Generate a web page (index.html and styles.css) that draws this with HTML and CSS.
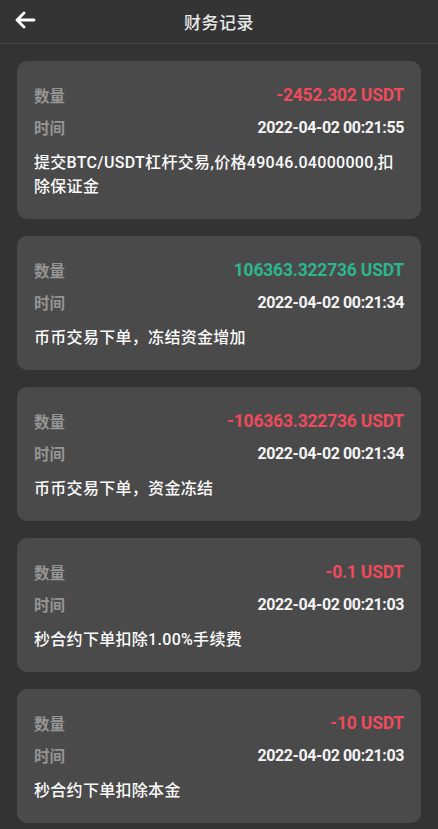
FILE: index.html
```html
<!DOCTYPE html>
<html lang="zh">
<head>
<meta charset="utf-8">
<title>财务记录</title>
<link rel="stylesheet" href="styles.css">
</head>
<body>
<header class="topbar">
  <span class="back">
    <svg width="22" height="18" viewBox="0 0 22 18"><path d="M20 9H3M10 2L3 9l7 7" fill="none" stroke="#fff" stroke-width="2.8" stroke-linecap="round" stroke-linejoin="round"/></svg>
  </span>
  <h1 class="title">财务记录</h1>
</header>
<main class="list">
  <section class="card">
    <div class="row"><span class="label">数量</span><span class="amount neg">-2452.302 USDT</span></div>
    <div class="row"><span class="label">时间</span><span class="time">2022-04-02 00:21:55</span></div>
    <p class="desc">提交BTC/USDT杠杆交易,价格49046.04000000,扣除保证金</p>
  </section>
  <section class="card">
    <div class="row"><span class="label">数量</span><span class="amount pos">106363.322736 USDT</span></div>
    <div class="row"><span class="label">时间</span><span class="time">2022-04-02 00:21:34</span></div>
    <p class="desc">币币交易下单，冻结资金增加</p>
  </section>
  <section class="card">
    <div class="row"><span class="label">数量</span><span class="amount neg">-106363.322736 USDT</span></div>
    <div class="row"><span class="label">时间</span><span class="time">2022-04-02 00:21:34</span></div>
    <p class="desc">币币交易下单，资金冻结</p>
  </section>
  <section class="card">
    <div class="row"><span class="label">数量</span><span class="amount neg">-0.1 USDT</span></div>
    <div class="row"><span class="label">时间</span><span class="time">2022-04-02 00:21:03</span></div>
    <p class="desc">秒合约下单扣除1.00%手续费</p>
  </section>
  <section class="card">
    <div class="row"><span class="label">数量</span><span class="amount neg">-10 USDT</span></div>
    <div class="row"><span class="label">时间</span><span class="time">2022-04-02 00:21:03</span></div>
    <p class="desc">秒合约下单扣除本金</p>
  </section>
</main>
</body>
</html>
```
FILE: styles.css
```css
* { box-sizing: border-box; }
html, body {
  margin: 0;
  padding: 0;
  background: #333333;
  font-family: Roboto, "Noto Sans CJK SC", sans-serif;
  color: #fff;
}
.topbar {
  height: 44px;
  background: #343434;
  border-bottom: 1px solid #474747;
  display: flex;
  align-items: center;
  justify-content: center;
  position: relative;
}
.back {
  position: absolute;
  left: 14px;
  top: 11px;
  display: flex;
}
.title {
  margin: 0;
  font-size: 17px;
  font-weight: 500;
  color: #e8e8e8;
  letter-spacing: 0.5px;
}
.list {
  padding: 17px 17px 10px;
  display: flex;
  flex-direction: column;
  gap: 17px;
}
.card {
  background: #4a4a4a;
  border-radius: 10px;
  padding: 18px 17px 20px;
}
.row {
  height: 32px;
  display: flex;
  align-items: center;
  justify-content: space-between;
}
.label {
  font-size: 15.5px;
  color: #959595;
  font-weight: 700;
}
.amount {
  font-size: 17.5px;
  font-weight: 700;
  letter-spacing: -0.2px;
}
.neg { color: #ee4a5c; }
.pos { color: #2db58c; }
.time {
  font-size: 16px;
  font-weight: 700;
  color: #f4f4f4;
  letter-spacing: -0.4px;
}
.desc {
  margin: 8px 0 0;
  font-size: 16px;
  line-height: 24px;
  color: #fafafa;
  font-weight: 500;
  letter-spacing: 0.3px;
}
```
